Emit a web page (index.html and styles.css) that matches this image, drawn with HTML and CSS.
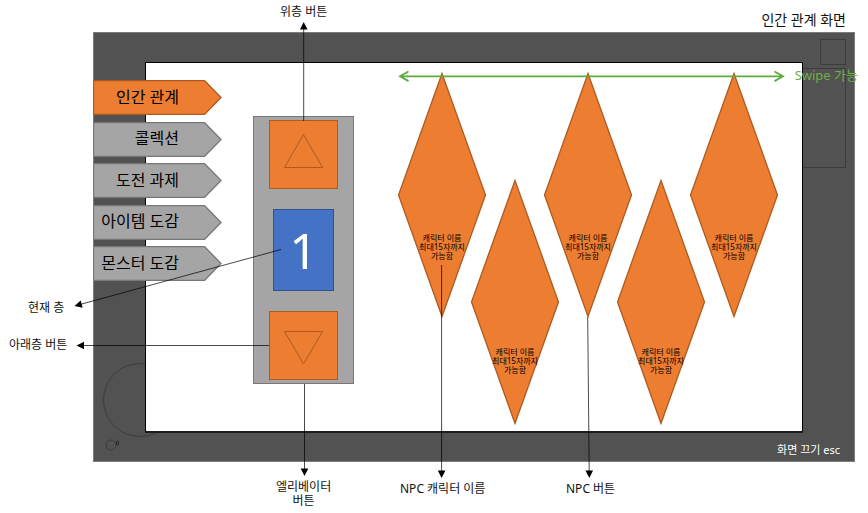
FILE: index.html
```
<!DOCTYPE html>
<html lang="ko">
<head>
<meta charset="utf-8">
<meta name="viewport" content="width=device-width, initial-scale=1">
<title>인간 관계 화면</title>
<link rel="stylesheet" href="styles.css">
</head>
<body>
<div class="sheet">
  <header class="sheet-header"><h1 class="sheet-title">인간 관계 화면</h1></header>

  <main class="frame">
    <svg class="dial" width="80" height="104" aria-hidden="true">
      <circle cx="46" cy="42" r="36.5"/>
      <circle cx="17" cy="87" r="5"/>
      <ellipse class="dial-dot" cx="23.500" cy="85" rx="1.200" ry="2"/>
    </svg>
    <div class="slot slot-small"></div>
    <div class="slot slot-tall"></div>

    <nav class="tabs">
      <button class="tab tab-active" type="button"><svg class="tab-shape" viewBox="0 0 129 35" aria-hidden="true"><path d="M.5 .5H111.500L128 17.500L111.500 34.500H.5Z"/></svg><span>인간 관계</span></button>
      <button class="tab" type="button"><svg class="tab-shape" viewBox="0 0 129 35" aria-hidden="true"><path d="M.5 .5H111.500L128 17.500L111.500 34.500H.5Z"/></svg><span>콜렉션</span></button>
      <button class="tab" type="button"><svg class="tab-shape" viewBox="0 0 129 35" aria-hidden="true"><path d="M.5 .5H111.500L128 17.500L111.500 34.500H.5Z"/></svg><span>도전 과제</span></button>
      <button class="tab" type="button"><svg class="tab-shape" viewBox="0 0 129 35" aria-hidden="true"><path d="M.5 .5H111.500L128 17.500L111.500 34.500H.5Z"/></svg><span>아이템 도감</span></button>
      <button class="tab" type="button"><svg class="tab-shape" viewBox="0 0 129 35" aria-hidden="true"><path d="M.5 .5H111.500L128 17.500L111.500 34.500H.5Z"/></svg><span>몬스터 도감</span></button>
    </nav>

    <section class="screen">
      <div class="elevator">
        <button class="lift" type="button" aria-label="위층"><svg width="41" height="35" aria-hidden="true"><path d="M20.500 .5L39.500 33.500H1.500Z"/></svg></button>
        <output class="floor">1</output>
        <button class="lift" type="button" aria-label="아래층"><svg width="41" height="35" aria-hidden="true"><path d="M20.500 35L39.500 2.500H1.500Z"/></svg></button>
      </div>
      <div class="npcs">
        <button class="npc" type="button"><svg class="npc-shape" viewBox="0 0 88 246" aria-hidden="true"><path d="M44 1.500L87.500 123L44 244.500L.5 123Z"/></svg><span>캐릭터 이름<br>최대15자까지<br>가능함</span></button>
        <button class="npc" type="button"><svg class="npc-shape" viewBox="0 0 88 246" aria-hidden="true"><path d="M44 1.500L87.500 123L44 244.500L.5 123Z"/></svg><span>캐릭터 이름<br>최대15자까지<br>가능함</span></button>
        <button class="npc" type="button"><svg class="npc-shape" viewBox="0 0 88 246" aria-hidden="true"><path d="M44 1.500L87.500 123L44 244.500L.5 123Z"/></svg><span>캐릭터 이름<br>최대15자까지<br>가능함</span></button>
        <button class="npc" type="button"><svg class="npc-shape" viewBox="0 0 88 246" aria-hidden="true"><path d="M44 1.500L87.500 123L44 244.500L.5 123Z"/></svg><span>캐릭터 이름<br>최대15자까지<br>가능함</span></button>
        <button class="npc" type="button"><svg class="npc-shape" viewBox="0 0 88 246" aria-hidden="true"><path d="M44 1.500L87.500 123L44 244.500L.5 123Z"/></svg><span>캐릭터 이름<br>최대15자까지<br>가능함</span></button>
      </div>
    </section>

    <div class="close">화면 끄기 esc</div>
  </main>

  <svg class="arrows" aria-hidden="true">
    <g class="leader">
      <path d="M303.700 121V28"/>
      <path d="M281 249.500L80 304.500"/>
      <path d="M269 345.500H82"/>
      <path d="M304.500 384V470"/>
      <path d="M441.600 265V472"/>
      <path d="M587.700 317L589.200 472"/>
    </g>
    <g class="head">
      <path d="M303.700 22L307.500 29.500H300Z"/>
      <path d="M74.500 306L80.700 300.500L82.600 307.800Z"/>
      <path d="M76.500 345.500L84 341.700V349.300Z"/>
      <path d="M304.500 476L300.700 468.500H308.300Z"/>
      <path d="M441.600 478L437.800 470.500H445.400Z"/>
      <path d="M589.300 478L585.500 470.500H593.100Z"/>
    </g>
    <path class="swipe" d="M400 76.300H783M408.500 71.500L400 76.300L408.500 81.100M774.500 71.500L783 76.300L774.500 81.100"/>
  </svg>

  <p class="note note-up">위층 버튼</p>
  <p class="note note-floor">현재 층</p>
  <p class="note note-down">아래층 버튼</p>
  <p class="note note-elevator">엘리베이터<br>버튼</p>
  <p class="note note-name">NPC 캐릭터 이름</p>
  <p class="note note-npc">NPC 버튼</p>
  <p class="note note-swipe">Swipe 가능</p>
</div>
</body>
</html>
```
FILE: styles.css
```
* {
  box-sizing: border-box;
}

body {
  margin: 0;
  background: #fff;
  color: #111;
  font-family: "Noto Sans", "Noto Sans CJK KR", sans-serif;
  font-size: 12px;
  line-height: 14px;
}

button {
  padding: 0;
  border: 0;
  background: none;
  color: inherit;
  font: inherit;
}

.sheet {
  position: relative;
  padding: 0 13px 51px 93px;
  overflow: hidden;
}

.sheet-header {
  display: flex;
  justify-content: flex-end;
  height: 32px;
  padding: 10px 9px 0 0;
}

.sheet-title {
  margin: 0;
  font-size: 14px;
  font-weight: 400;
  line-height: 20px;
}

.frame {
  position: relative;
  z-index: 0;
  display: grid;
  grid-template-columns: 51px 1fr 51px;
  grid-template-rows: 29px auto 28px;
  border: 1px solid #7b7b7b;
  background: #525252;
}

.dial {
  position: absolute;
  left: 0;
  bottom: -1px;
  fill: none;
  stroke: #3c3c3c;
}

.dial-dot {
  stroke: #222;
}

.slot {
  position: absolute;
  border: 1px solid #3c3c3c;
}

.slot-small {
  top: 6px;
  right: 8px;
  width: 26px;
  height: 26px;
}

.slot-tall {
  top: 35px;
  right: 8px;
  width: 45px;
  height: 100px;
}

.tabs {
  grid-area: 2 / 1 / 3 / 3;
  z-index: 2;
  display: flex;
  flex-direction: column;
  justify-content: space-between;
  justify-self: start;
  align-self: start;
  height: 201px;
  margin: 18px 0 0 -1px;
}

.tab {
  display: grid;
  align-items: center;
  width: 129px;
  height: 35px;
  color: #000;
  font-size: 16px;
  line-height: 20px;
  text-align: right;
}

.tab > * {
  grid-area: 1 / 1;
}

.tab span {
  padding: 0 43px 2px 0;
  z-index: 1;
}

.tab-shape {
  width: 129px;
  height: 35px;
  fill: #a5a5a5;
  stroke: #787878;
  stroke-width: 1.3;
}

.tab-active .tab-shape {
  fill: #ed7d31;
  stroke: #ae5a21;
}

.screen {
  grid-area: 2 / 2;
  z-index: 1;
  display: flex;
  align-items: flex-start;
  gap: 44px;
  padding: 9px 0 6px 107px;
  border: 1px solid #000;
  border-bottom: 2px solid #1c1c1c;
  background: #fff;
}

.elevator {
  display: flex;
  flex: none;
  flex-direction: column;
  align-items: center;
  gap: 20px;
  width: 101px;
  margin-top: 44px;
  padding: 3px;
  border: 1px solid #787878;
  background: #a5a5a5;
}

.lift {
  display: flex;
  align-items: center;
  justify-content: center;
  width: 69px;
  height: 69px;
  border: 1px solid #ae5a21;
  background: #ed7d31;
}

.lift:first-child {
  align-items: flex-start;
  padding-top: 13px;
}

.lift:last-child {
  align-items: flex-start;
  padding-top: 17px;
}

.lift svg {
  fill: none;
  stroke: #ae5a21;
}

.floor {
  display: flex;
  align-items: center;
  justify-content: center;
  width: 61px;
  height: 82px;
  border: 1px solid #2f528f;
  background: #4472c4;
  color: #fff;
  font-size: 50px;
  line-height: 56px;
}

.npcs {
  display: flex;
  align-items: flex-start;
}

.npc {
  display: grid;
  flex: none;
  align-items: start;
  width: 88px;
  height: 246px;
  color: #000;
  font-size: 8px;
  line-height: 9px;
  text-align: center;
}

.npc + .npc {
  margin-left: -15px;
}

.npc:nth-child(even) {
  margin-top: 107px;
}

.npc > * {
  grid-area: 1 / 1;
}

.npc span {
  padding-top: 161px;
  z-index: 1;
}

.npc:nth-child(even) span {
  padding-top: 168px;
}

.npc-shape {
  width: 88px;
  height: 246px;
  fill: #ed7d31;
  stroke: #ae5a21;
  stroke-width: 1.3;
}

.close {
  grid-area: 3 / 2 / 4 / 4;
  align-self: center;
  padding: 6px 14px 0 0;
  color: #fff;
  font-size: 11px;
  text-align: right;
}

.arrows {
  position: absolute;
  top: 0;
  left: 0;
  width: 100%;
  height: 100%;
  pointer-events: none;
}

.leader {
  fill: none;
  stroke: #000;
  opacity: 0.7;
}

.head {
  fill: #000;
}

.swipe {
  fill: none;
  stroke: #61aa3c;
  stroke-width: 1.8;
}

.note {
  position: absolute;
  margin: 0;
  text-align: center;
  white-space: nowrap;
}

.note-up {
  top: 5px;
  left: 280px;
}

.note-floor {
  top: 301px;
  left: 28px;
}

.note-down {
  top: 338px;
  left: 9px;
}

.note-elevator {
  top: 480px;
  left: 276px;
}

.note-name {
  top: 482px;
  left: 400px;
}

.note-npc {
  top: 482px;
  left: 566px;
}

.note-swipe {
  top: 68px;
  right: 10px;
  color: #70ad47;
  font-size: 13px;
}
```
